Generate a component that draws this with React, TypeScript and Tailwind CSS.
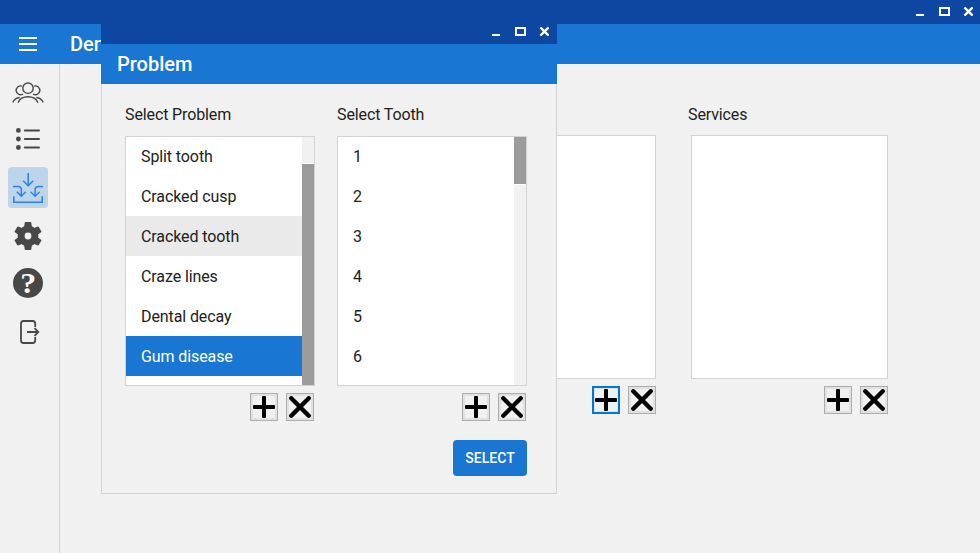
import React from "react";

function WindowControls() {
  return (
    <svg width="57" height="9" viewBox="0 0 57 9" fill="none">
      <rect x="0" y="7" width="8" height="2" fill="#fff" />
      <rect x="24" y="1" width="9" height="7" stroke="#fff" strokeWidth="2" />
      <path d="M48.4 .4L56.6 8.6M56.6 .4L48.4 8.6" stroke="#fff" strokeWidth="2.3" />
    </svg>
  );
}

function SquareButton({ kind, focused }: { kind: "add" | "remove"; focused?: boolean }) {
  return (
    <button
      aria-label={kind}
      className={
        "flex size-7 items-center justify-center bg-[#e1e1e1] " +
        (focused ? "border-2 border-[#0078d7]" : "border border-[#adadad]")
      }
    >
      <svg className="shrink-0" width="22" height="22" viewBox="0 0 22 22">
        <rect width="22" height="22" fill="#f1f1f1" />
        {kind === "add" ? (
          <g>
            <rect x="0" y="9" width="22" height="4" rx="1" />
            <rect x="9" y="0" width="4" height="22" rx="1" />
          </g>
        ) : (
          <path d="M2.3 2.3L19.7 19.7M19.7 2.3L2.3 19.7" stroke="#000" strokeWidth="4.4" strokeLinecap="round" />
        )}
      </svg>
    </button>
  );
}

function ButtonPair({ focused }: { focused?: boolean }) {
  return (
    <div className="flex justify-end gap-2">
      <SquareButton kind="add" focused={focused} />
      <SquareButton kind="remove" />
    </div>
  );
}

function PeopleIcon() {
  return (
    <svg className="mt-[3px]" width="32" height="22" viewBox="0 0 32 22" fill="none" stroke="#484848" strokeWidth="1.4">
      <circle cx="16" cy="6.2" r="5.2" />
      <path d="M10 4.2A4.4 4.4 0 1 0 11 12M22 4.2A4.4 4.4 0 1 1 21 12" />
      <path d="M6 20.6C8 16.3 11.5 14.8 16 14.8S24 16.3 26 20.6" />
      <path d="M.8 20.4C2 17.5 4.2 15.8 7.8 15.5M31.2 20.4C30 17.5 27.8 15.8 24.2 15.5" />
    </svg>
  );
}

function ListIcon() {
  return (
    <svg width="24" height="22" viewBox="0 0 24 22" fill="#484848">
      {[2.4, 11, 19.5].map((y) => (
        <g key={y}>
          <circle cx="2.4" cy={y} r="2.4" />
          <path d={`M8.8 ${y}H23`} stroke="#484848" strokeWidth="2" strokeLinecap="round" />
        </g>
      ))}
    </svg>
  );
}

function CollectIcon() {
  return (
    <svg width="30" height="30" viewBox="0 0 30 30" fill="none" stroke="#2f7ff0" strokeWidth="1.5">
      <path d="M15.2 0V12.5M10.2 7.8L15.2 12.8L20.2 7.8" />
      <path d="M0 13.5H5C7.4 13.5 8.3 14.6 8.3 16.8V23M3.8 18.8L8.3 23.3L12.8 18.8" />
      <path d="M30 13.5H25.4C23 13.5 22.1 14.6 22.1 16.8V23M17.6 18.8L22.1 23.3L26.6 18.8" />
      <path d="M.8 23.2V29.2H29.2V23.2" />
    </svg>
  );
}

function GearIcon() {
  return (
    <svg className="-mt-px" width="28" height="28" viewBox="0 0 28 28">
      <g fill="#484848">
        <circle cx="14" cy="14" r="10.4" />
        {[0, 60, 120, 180, 240, 300].map((a) => (
          <path key={a} transform={`rotate(${a} 14 14)`} d="M8.4 6L10.2 4.6L10.7 .8Q10.8 .1 11.5 .1H16.5Q17.2 .1 17.3 .8L17.8 4.6L19.6 6Z" />
        ))}
      </g>
      <circle cx="14" cy="14" r="3.4" fill="#f1f1f1" />
    </svg>
  );
}

function HelpIcon() {
  return (
    <div className="-mt-0.5 flex size-[30px] items-center justify-center rounded-full bg-[#484848]">
      <span className="scale-x-110 font-['Liberation_Serif',serif] text-[29px] leading-[30px] font-bold text-white">?</span>
    </div>
  );
}

function ExitIcon() {
  return (
    <svg className="-mt-px ml-[3px]" width="20" height="24" viewBox="0 0 20 24" fill="none" stroke="#484848" strokeWidth="1.8">
      <path d="M15.2 7V3.5Q15.2 1 12.7 1H3.5Q1 1 1 3.5V20.5Q1 23 3.5 23H12.7Q15.2 23 15.2 20.5V17" />
      <path d="M7 12H18M14.5 8.2L18.3 12L14.5 15.8" />
    </svg>
  );
}

function Sidebar() {
  const icons = [PeopleIcon, ListIcon, CollectIcon, GearIcon, HelpIcon, ExitIcon];
  return (
    <nav className="flex w-[60px] shrink-0 flex-col items-start gap-2 border-r border-[#d2d2d2] pt-[7px] pl-2">
      {icons.map((Icon, i) => (
        <div
          key={i}
          className={
            "flex w-10 shrink-0 items-center justify-center " +
            (i === 2 ? "h-[41px] rounded bg-[#bdd5eb]" : "h-10")
          }
        >
          <Icon />
        </div>
      ))}
    </nav>
  );
}

interface PickListProps {
  label: string;
  items: string[];
  hovered?: number;
  selected?: number;
  atEnd?: boolean;
}

function PickList({ label, items, hovered, selected, atEnd }: PickListProps) {
  return (
    <section className="w-[190px]">
      <h2 className="h-[52px] pt-[19px] text-base leading-6 tracking-[-0.12px]">{label}</h2>
      <div className="flex h-[250px] overflow-hidden border border-[#d2d2d2] bg-white">
        <ul className="-mt-px grow">
          {items.map((item, i) => (
            <li
              key={item}
              className={
                "h-10 pt-px pl-[15px] text-base leading-10 tracking-[-0.1px] " +
                (i === selected ? "bg-[#1976d2] text-white" : i === hovered ? "bg-[#eaeaea]" : "")
              }
            >
              {item}
            </li>
          ))}
        </ul>
        {atEnd ? (
          <div className="flex w-3 flex-col gap-px">
            <div className="h-[26px] bg-[#f1f1f1]" />
            <div className="grow bg-[#9b9b9b]" />
          </div>
        ) : (
          <div className="flex w-3 flex-col gap-px">
            <div className="h-[47px] bg-[#9b9b9b]" />
            <div className="grow bg-[#f1f1f1]" />
          </div>
        )}
      </div>
      <div className="mt-[7px] pr-px">
        <ButtonPair />
      </div>
    </section>
  );
}

function ProblemDialog() {
  return (
    <div className="absolute top-6 left-[101px] flex h-[470px] w-[456px] flex-col bg-[#f1f1f1]">
      <div className="flex h-5 shrink-0 justify-end bg-[#0d47a1] pt-[3px] pr-2">
        <WindowControls />
      </div>
      <div className="h-10 shrink-0 bg-[#1976d2] pl-4 text-xl leading-10 font-medium text-white">Problem</div>
      <div className="grow border-x border-b border-[#d2d2d2] pr-[29px] pl-[23px]">
        <div className="flex gap-[22px]">
          <PickList
            label="Select Problem"
            items={["Split tooth", "Cracked cusp", "Cracked tooth", "Craze lines", "Dental decay", "Gum disease"]}
            hovered={2}
            selected={5}
            atEnd
          />
          <PickList label="Select Tooth" items={["1", "2", "3", "4", "5", "6"]} />
        </div>
        <div className="mt-[19px] flex justify-end">
          <button className="h-9 w-[74px] rounded bg-[#1976d2] text-sm font-medium text-white">SELECT</button>
        </div>
      </div>
    </div>
  );
}

export default function App() {
  return (
    <div className="relative flex h-[553px] w-[980px] flex-col overflow-hidden bg-[#f1f1f1] font-[Roboto,sans-serif] text-[#212121]">
      <div className="flex h-6 shrink-0 justify-end bg-[#0d47a1] pt-[7px] pr-[7px]">
        <WindowControls />
      </div>
      <header className="flex h-10 shrink-0 items-center bg-[#1976d2] pl-[19px]">
        <div className="flex w-[18px] flex-col gap-1">
          <div className="h-0.5 bg-white" />
          <div className="h-0.5 bg-white" />
          <div className="h-0.5 bg-white" />
        </div>
        <span className="ml-[33px] text-xl font-medium text-white">Dental</span>
      </header>
      <div className="flex grow">
        <Sidebar />
        <main className="flex grow justify-end gap-8 pr-[92px]">
          <section className="w-[200px] pl-[3px]">
            <div className="mt-[71px] mb-[7px] h-[244px] border border-[#d2d2d2] bg-white" />
            <ButtonPair focused />
          </section>
          <section className="w-[200px]">
            <h2 className="h-[71px] pt-[39px] text-base leading-6 tracking-[-0.12px]">Services</h2>
            <div className="mb-[7px] ml-[3px] h-[244px] border border-[#d2d2d2] bg-white" />
            <ButtonPair />
          </section>
        </main>
      </div>
      <ProblemDialog />
    </div>
  );
}
